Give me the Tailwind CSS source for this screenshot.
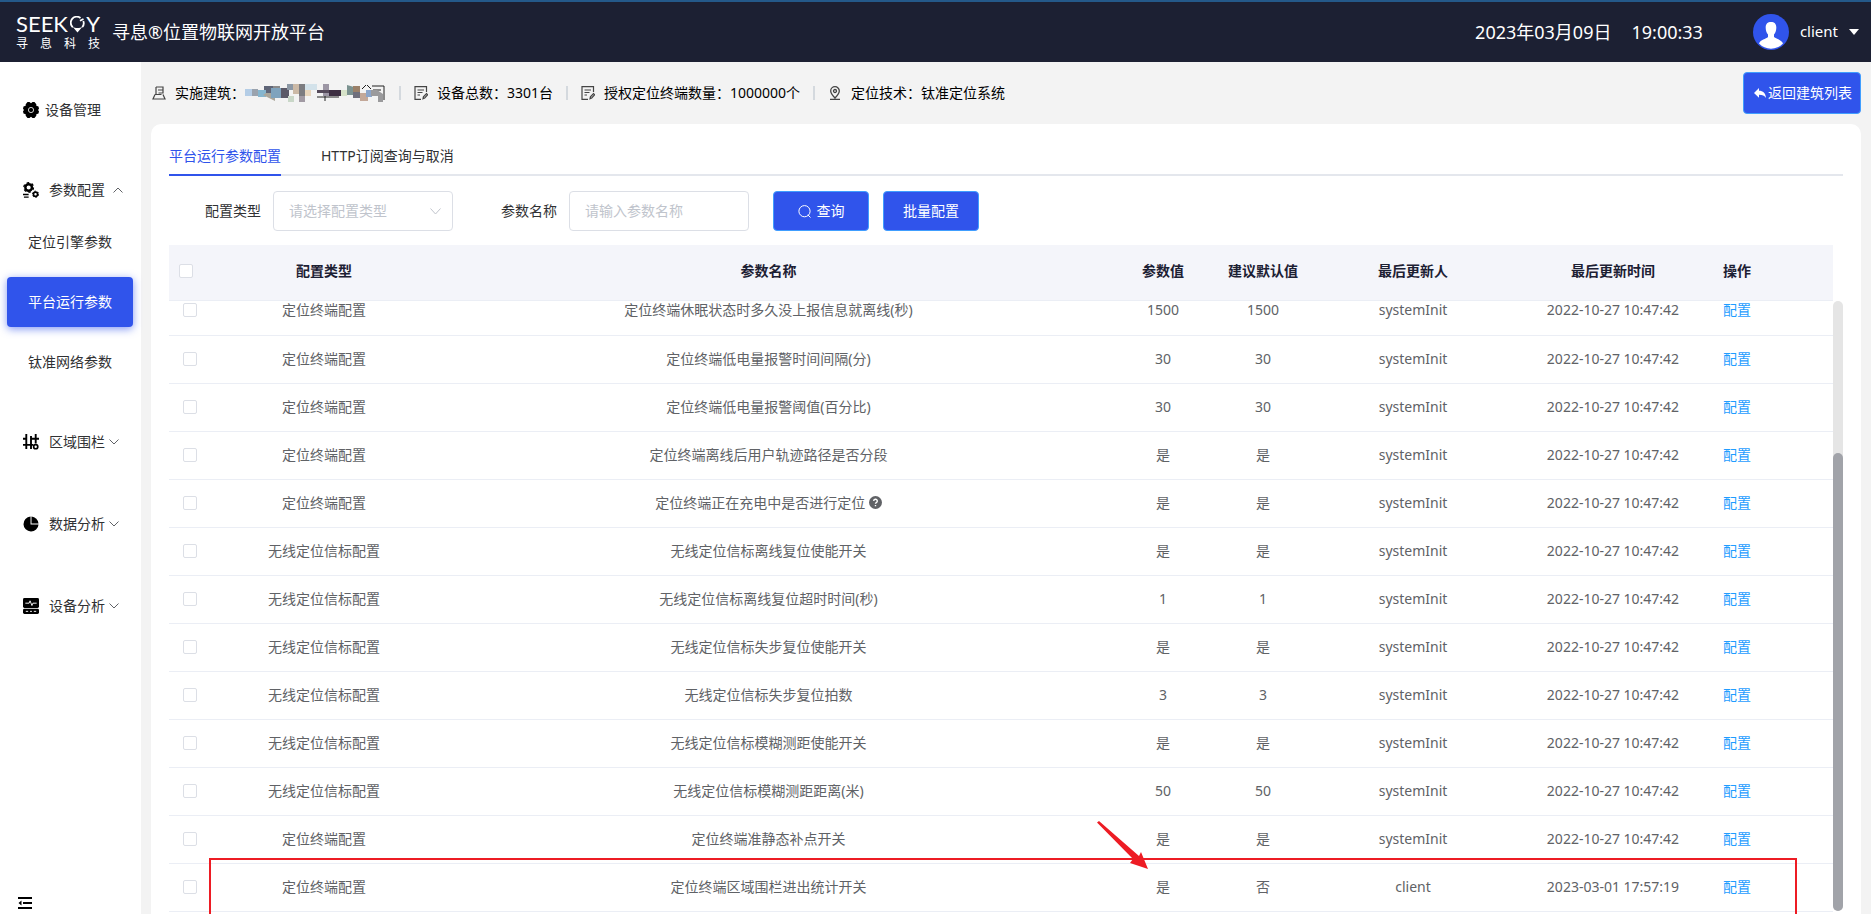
<!DOCTYPE html>
<html lang="zh-CN">
<head>
    <meta charset="UTF-8">
    <meta name="viewport" content="width=device-width, initial-scale=1.0">
    <title>寻息®位置物联网开放平台</title>
    <script src="https://cdn.jsdelivr.net/npm/@tailwindcss/browser@4"></script>
</head>
<body class="flex flex-col h-screen overflow-hidden bg-[#f3f3f3] text-sm text-[#303133] font-['Noto_Sans','Noto_Sans_CJK_SC',sans-serif]">

    <!-- Header -->
    <header class="flex items-center justify-between h-[62px] shrink-0 pl-4 pr-3 bg-[#1c2033] border-t-2 border-[#24598a] text-white">
        <div class="flex items-center gap-3">
            <div class="w-[84px] flex flex-col gap-1">
                <div class="flex items-center justify-between h-5 text-[22px] leading-5 font-['Lato',sans-serif]">
                    <span>SEEK</span>
                    <svg class="w-[15px] h-[17px]" viewBox="0 0 15 17" fill="none" stroke="currentColor" stroke-width="1.800"><path d="M10.500 2A6 6 0 0 0 2.800 11.200M12.200 11.200A6 6 0 0 0 13.300 5"/><path d="M2.400 10.600c3 2 7.200 2 10.200 0L7.500 16.500z" fill="currentColor" stroke="none"/><path d="M10 4.800 13.500 3"/></svg>
                    <span>Y</span>
                </div>
                <div class="flex justify-between text-xs leading-3"><span>寻</span><span>息</span><span>科</span><span>技</span></div>
            </div>
            <h1 class="text-lg leading-6">寻息®位置物联网开放平台</h1>
        </div>
        <div class="flex items-center">
            <p class="flex gap-5 text-lg"><span>2023年03月09日</span><span>19:00:33</span></p>
            <button class="flex items-center gap-[11px] ml-[50px] text-[15px]">
                <svg class="size-9" viewBox="0 0 36 36"><circle cx="18" cy="18" r="18" fill="#3054eb"/><path fill="#fff" d="M18 8c3.500 0 5.500 2 5.300 6-.1 3-.9 5-2.300 6.500v2.500c2 2 7.500 2.500 9 6.500a16.500 16.500 0 0 1-24 0c1.500-4 7-4.500 9-6.500v-2.500c-1.400-1.500-2.200-3.500-2.300-6.500C12.500 10 14.500 8 18 8z"/></svg>
                client
                <svg class="w-[10px] h-[6px]" viewBox="0 0 10 6" fill="#fff"><path d="M0 0h10L5 6z"/></svg>
            </button>
        </div>
    </header>

    <div class="flex flex-1 min-h-0">
        <!-- Sidebar -->
        <nav class="flex flex-col w-[141px] shrink-0 bg-white">
            <a href="#" class="flex items-center h-12 mt-6 pl-[23px] gap-[6px]">
                <svg class="size-4" viewBox="0 0 16 16"><path fill="#000" d="M4.500 0h2L8 1.200 9.500 0h2l1.800 2.200v1.600l2.200.8.5 2.200-1 1.200 1 1.200-.5 2.200-2.200.8v1.600L11.500 16h-2L8 14.800 6.500 16h-2l-1.800-2.200v-1.600l-2.200-.8L0 9.200 1 8 0 6.800l.5-2.200 2.200-.8V2.200z"/><circle cx="8" cy="8" r="2.600" fill="none" stroke="#fff" stroke-width=".8"/></svg>
                设备管理
            </a>
            <a href="#" class="flex items-center h-12 mt-8 pl-[23px]">
                <svg class="size-4 mr-[10px]" viewBox="0 0 17 17" fill="none" stroke="#000"><circle cx="6" cy="5.800" r="3.500" stroke-width="2.600"/><circle cx="6" cy="5.800" r="5.100" stroke-width="1.400" stroke-dasharray="2.670"/><circle cx="13.300" cy="13" r="2.200" stroke-width="1.800"/><circle cx="13.300" cy="13" r="3.300" stroke-width="1" stroke-dasharray="1.730"/><path d="M0 13.300h6M1 16h5" stroke-width="1.400"/></svg>
                参数配置
                <svg class="w-[10px] h-[6px] ml-2" viewBox="0 0 10 6" fill="none" stroke="#606266"><path d="M.5 5.500 5 1l4.500 4.500"/></svg>
            </a>
            <a href="#" class="flex items-center justify-center h-[50px] ml-[7px] mr-2 mt-[3px]">定位引擎参数</a>
            <a href="#" class="flex items-center justify-center h-[50px] ml-[7px] mr-2 mt-[10px] rounded bg-[#3054eb] text-white shadow-[0_2px_8px_#3054eb99]">平台运行参数</a>
            <a href="#" class="flex items-center justify-center h-[50px] ml-[7px] mr-2 mt-[10px]">钛准网络参数</a>
            <a href="#" class="flex items-center h-12 mt-[31px] pl-[23px]">
                <svg class="size-4 mr-[10px]" viewBox="0 0 17 17" fill="none" stroke="#000" stroke-width="2"><path d="M3.500 0v16M8.500 2v14M13.500 0v10M0 5h3.500M8.500 5H17M0 11.500h11"/><circle cx="13.500" cy="13.500" r="2.200" stroke-width="1.800"/></svg>
                区域围栏
                <svg class="w-[10px] h-[6px] ml-1" viewBox="0 0 10 6" fill="none" stroke="#606266"><path d="M.5.5 5 5 9.500.5"/></svg>
            </a>
            <a href="#" class="flex items-center h-12 mt-[34px] pl-[23px]">
                <svg class="size-4 mr-[10px]" viewBox="0 0 17 17" fill="#000"><path d="M8 .5V9h8.500A8 8 0 1 1 8 .5z"/><path d="M9 .5A8 8 0 0 1 16.500 8H9z"/></svg>
                数据分析
                <svg class="w-[10px] h-[6px] ml-1" viewBox="0 0 10 6" fill="none" stroke="#606266"><path d="M.5.5 5 5 9.500.5"/></svg>
            </a>
            <a href="#" class="flex items-center h-12 mt-[34px] pl-[23px]">
                <svg class="size-4 mr-[10px]" viewBox="0 0 17 17"><rect width="17" height="10.500" rx="1.500"/><rect y="11.500" width="17" height="5.500" rx="1.500"/><path fill="none" stroke="#fff" d="M2.500 5.500h4l1-2.500 2 5 1-2.500h4M3 14.200h2.500M7.500 14.200h2M11.500 14.200h2.500"/></svg>
                设备分析
                <svg class="w-[10px] h-[6px] ml-1" viewBox="0 0 10 6" fill="none" stroke="#606266"><path d="M.5.5 5 5 9.500.5"/></svg>
            </a>
            <button class="mt-auto ml-[18px] mb-[5px] w-[14px]" aria-label="收起菜单">
                <svg class="w-[14px] h-3" viewBox="0 0 14 12" fill="none" stroke="#000" stroke-width="2"><path d="M0 1h14M5 6h9M0 11h14"/><path d="M3.500 3.500v5L.5 6z" fill="#000" stroke="none"/></svg>
            </button>
        </nav>

        <main class="flex flex-col flex-1 min-w-0 px-[10px]">
            <!-- Building summary -->
            <div class="flex items-center justify-between h-[62px] shrink-0 text-black">
                <div class="flex items-center">
                    <svg class="size-[14px] mr-[9px] ml-[1px]" viewBox="0 0 14 14" fill="none" stroke="#444" stroke-width="1.200"><path d="M4 1h7v6H6.500M4 1v7M6 4h5M3 8.500h6.500M3 8.500 1 13h12l-2-4.500"/></svg>
                    <span>实施建筑：</span>
                    <svg class="w-[141px] h-[18px]" viewBox="0 0 141 18" aria-hidden="true">
                        <path fill="none" stroke="#222" d="M72 13h22M80 9v8M27 3h8M117 5l4-4M122 1l4 4M127 2h12v14M128 6h8"/>
                        <path fill="#b4cde6" d="M0 5h7v7H0z"/><path fill="#9aa3ae" d="M7 5h6v7H7z"/><path fill="#5f6577" d="M19 2h9v7h-9z"/><path fill="#86b6cf" d="M13 6h8v7h-8z"/><path fill="#aaa69b" d="M18 11l12 6V9h-9z"/><path fill="#7fa3bd" d="M26 4h10v10H26z"/><path fill="#5b5967" d="M36 4h8v10h-8z"/><path fill="#8c98a5" d="M42 0h6v6h-6z"/><path fill="#cbb9a6" d="M48 0h6v10h-6z"/><path fill="#7c7c80" d="M54 0h6v13h-6z"/><path fill="#c9d7c8" d="M43 12h6v6h-6z"/><path fill="#a19aa3" d="M54 12h6v6h-6z"/><path fill="#e8d6bd" d="M60 6h6v6h-6z"/><path fill="#d3e2ea" d="M60 0h12v6h-12z"/><path fill="#9c96a4" d="M78 0h6v12h-6z"/><path fill="#554a5a" d="M72 6h12v3H72z"/><path fill="#3d2e42" d="M84 6h12v6H84z"/><path fill="#d7e3c9" d="M96 6h6v6h-6z"/><path fill="#7b9290" d="M102 1l7 2v8h-7z"/><path fill="#9a8068" d="M108 2h7v6h-7z"/><path fill="#6f6f7c" d="M108 8h7v6h-7z"/><path fill="#c3a899" d="M115 9h8v8h-8z"/><path fill="#8ba5ca" d="M121 6h6v7h-6z"/><path fill="#9a9a9c" d="M126 6h6l6 4v8h-5v-6h-7z"/>
                    </svg>
                    <span class="w-[2px] h-[14px] mx-[13px] bg-[#d4d9de]"></span>
                    <svg class="size-[14px] mr-[9px]" viewBox="0 0 14 14" fill="none" stroke="#444" stroke-width="1.200"><path d="M12.500 6V.6H1v12.800h6M3.500 4h6.500M3.500 6.500h5M3.500 9H6M9 12.800l.4-2L12.500 7.500l1.200 1.200-3 3.300z"/></svg>
                    <span>设备总数：3301台</span>
                    <span class="w-[2px] h-[14px] mx-[13px] bg-[#d4d9de]"></span>
                    <svg class="size-[14px] mr-[9px]" viewBox="0 0 14 14" fill="none" stroke="#444" stroke-width="1.200"><path d="M12.500 6V.6H1v12.800h6M3.500 4h6.500M3.500 6.500h5M3.500 9H6M9 12.800l.4-2L12.500 7.500l1.200 1.200-3 3.300z"/></svg>
                    <span>授权定位终端数量：1000000个</span>
                    <span class="w-[2px] h-[14px] mx-[13px] bg-[#d4d9de]"></span>
                    <svg class="size-[14px] mr-[9px]" viewBox="0 0 14 14" fill="none" stroke="#444" stroke-width="1.300"><path d="M7 12C4 9 2.700 7 2.700 5a4.300 4.300 0 0 1 8.600 0c0 2-1.300 4-4.300 7zM2 13.300h10"/><circle cx="7" cy="5" r="1.500"/></svg>
                    <span>定位技术：钛准定位系统</span>
                </div>
                <button class="flex items-center h-[42px] pl-[10px] pr-2 rounded border border-[#409eff] bg-[#3054eb] text-white">
                    <svg class="w-3 h-[11px] mr-[2px]" viewBox="0 0 12 11" fill="#fff"><path d="M5 0v2.700c4 0 6.600 2 7 7.300-1.500-2.500-3.500-3.300-7-3.300v3L0 5z"/></svg>返回建筑列表
                </button>
            </div>

            <!-- Card -->
            <section class="flex flex-col flex-1 min-h-0 px-[18px] pb-[2px] rounded-t-[10px] bg-white">
                <div class="flex gap-10 h-[52px] shrink-0 border-b-2 border-[#e4e7ed]">
                    <button class="h-[52px] pt-[14px] border-b-2 border-[#3054eb] text-[#3054eb]">平台运行参数配置</button>
                    <button class="h-[52px] pt-[14px] border-b-2 border-transparent">HTTP订阅查询与取消</button>
                </div>

                <form class="flex items-center shrink-0 pt-[15px] pb-[14px] pl-9">
                    <label for="type" class="mr-3">配置类型</label>
                    <div class="relative mr-12">
                        <select id="type" class="appearance-none w-[180px] h-10 px-[15px] rounded border border-[#dcdfe6] bg-white text-[#c0c4cc]"><option>请选择配置类型</option></select>
                        <svg class="absolute right-3 top-[17px] w-[11px] h-[7px] pointer-events-none" viewBox="0 0 11 7" fill="none" stroke="#c0c4cc"><path d="M.5.500 5.500 6l5-5.500"/></svg>
                    </div>
                    <label for="name" class="mr-3">参数名称</label>
                    <input id="name" type="text" placeholder="请输入参数名称" class="w-[180px] h-10 px-[15px] pb-[2px] mr-6 rounded border border-[#dcdfe6] placeholder:text-[#c0c4cc]">
                    <button type="button" class="flex items-center justify-center gap-[6px] w-24 h-10 mr-[14px] rounded border border-[#409eff] bg-[#3054eb] text-white">
                        <svg class="size-[13px]" viewBox="0 0 13 13" fill="none" stroke="#fff"><circle cx="6.500" cy="6.200" r="5.600"/><path d="M9.800 9.800l2.700 2.700"/></svg>查询
                    </button>
                    <button type="button" class="w-24 h-10 rounded border border-[#409eff] bg-[#3054eb] text-white">批量配置</button>
                </form>

                <div class="shrink-0 mr-[10px]">
                    <table class="w-full table-fixed text-center text-[#1c2033]">
                        <colgroup><col class="w-[55px]"><col class="w-[200px]"><col><col class="w-[100px]"><col class="w-[100px]"><col class="w-[200px]"><col class="w-[200px]"><col class="w-[120px]"></colgroup>
                        <thead>
                            <tr class="h-[55px] bg-[#f4f5fa] border-b border-[#ebeef5] *:pb-[2px]">
                                <th class="pl-[10px] text-left"><input type="checkbox" aria-label="全选" class="block appearance-none size-[14px] rounded-[2px] border border-[#dcdfe6] bg-white"></th>
                                <th>配置类型</th><th>参数名称</th><th>参数值</th><th>建议默认值</th><th>最后更新人</th><th>最后更新时间</th><th class="pl-[10px] text-left">操作</th>
                            </tr>
                        </thead>
                    </table>
                </div>

                <div class="flex flex-1 min-h-0">
                    <div class="relative flex flex-col justify-end flex-1 min-w-0">
                        <div class="flex flex-col justify-end flex-1 min-h-0 overflow-hidden">
                            <table class="w-full table-fixed shrink-0 text-center text-[#606266]">
                                <colgroup><col class="w-[55px]"><col class="w-[200px]"><col><col class="w-[100px]"><col class="w-[100px]"><col class="w-[200px]"><col class="w-[200px]"><col class="w-[120px]"></colgroup>
                                <tbody id="rows"></tbody>
                            </table>
                        </div>
                        <!-- Highlighted row and pointer -->
                        <div class="absolute left-10 right-9 -bottom-3 h-[66px] border-2 border-[#ed1c24] pointer-events-none"></div>
                        <svg class="absolute right-[684px] bottom-[43px] w-[52px] h-12 pointer-events-none" viewBox="0 0 52 48" fill="#ed1c24"><path d="M2 0 0 1.500 36 38l-3 4 18 6-7-17-2 4z"/></svg>
                    </div>
                    <div class="flex flex-col justify-end w-[10px] shrink-0 mb-[1px] rounded-full bg-[#e5e5e5]">
                        <div class="h-3/4 rounded-full bg-[#a1a3a9]"></div>
                    </div>
                </div>
            </section>
        </main>
    </div>

    <script>
        const T = "定位终端配置", B = "无线定位信标配置";
        const help = ' <svg class="inline size-[13px] -mt-[2px]" viewBox="0 0 13 13"><circle cx="6.500" cy="6.500" r="6.500" fill="#606266"/><path d="M4.700 5a1.800 1.800 0 1 1 2.600 1.600c-.6.300-.8.500-.8 1.200M6.500 9v1.300" fill="none" stroke="#fff" stroke-width="1.400"/></svg>';
        const rows = [
            [T, "定位终端休眠状态时多久没上报信息就离线(秒)", "1500", "1500"],
            [T, "定位终端低电量报警时间间隔(分)", "30", "30"],
            [T, "定位终端低电量报警阈值(百分比)", "30", "30"],
            [T, "定位终端离线后用户轨迹路径是否分段", "是", "是"],
            [T, "定位终端正在充电中是否进行定位" + help, "是", "是"],
            [B, "无线定位信标离线复位使能开关", "是", "是"],
            [B, "无线定位信标离线复位超时时间(秒)", "1", "1"],
            [B, "无线定位信标失步复位使能开关", "是", "是"],
            [B, "无线定位信标失步复位拍数", "3", "3"],
            [B, "无线定位信标模糊测距使能开关", "是", "是"],
            [B, "无线定位信标模糊测距距离(米)", "50", "50"],
            [T, "定位终端准静态补点开关", "是", "是"],
            [T, "定位终端区域围栏进出统计开关", "是", "否", "client", "2023-03-01 17:57:19"],
        ];

        document.getElementById("rows").innerHTML = rows.map(([type, name, value, def, user = "systemInit", time = "2022-10-27 10:47:42"]) => `
            <tr class="h-12 border-b border-[#ebeef5] *:pb-[2px]">
                <td class="pl-[14px] text-left"><input type="checkbox" aria-label="选择" class="block appearance-none size-[14px] rounded-[2px] border border-[#dcdfe6] bg-white"></td>
                <td>${type}</td><td>${name}</td><td>${value}</td><td>${def}</td><td>${user}</td><td>${time}</td>
                <td class="pl-[10px] text-left"><a href="#" class="text-[#1f9dff]">配置</a></td>
            </tr>`).join("");
    </script>
</body>
</html>
